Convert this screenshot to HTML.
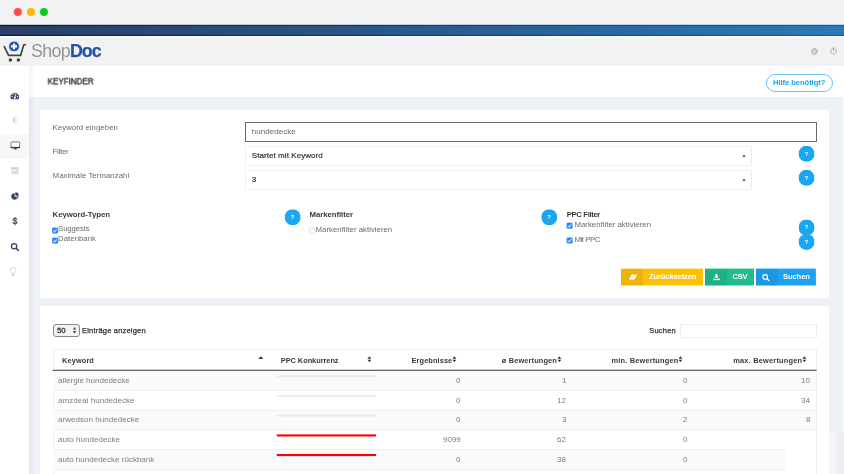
<!DOCTYPE html>
<html lang="de">
<head>
<meta charset="utf-8">
<title>ShopDoc – Keyfinder</title>
<style>
*{box-sizing:border-box;margin:0;padding:0}
html,body{width:844px;height:474px;overflow:hidden;background:#eef1f6;font-family:"Liberation Sans",sans-serif;}
body{position:relative}
.abs{position:absolute}
.t{position:absolute;white-space:nowrap;line-height:1;color:#6b6b6b;font-size:7.8px;will-change:transform}
.b{font-weight:bold;color:#3a3a3a}
#chrome{left:0;top:0;width:844px;height:24.4px;background:#f2f2f2}
.dot{position:absolute;left:0;top:0;width:8.4px;height:8.4px;border-radius:50%;will-change:transform}
#bluebar{left:0;top:24.4px;width:844px;height:11.6px;background:linear-gradient(90deg,#213b68 0%,#264f85 40%,#2b78b6 100%)}
#header{left:0;top:36px;width:844px;height:30px;background:#f2f2f2}
#sidebar{left:0;top:66px;width:29px;height:408px;background:#fff}
#sideshadow{left:29px;top:66px;width:6px;height:408px;background:linear-gradient(90deg,rgba(40,60,100,.06),rgba(40,60,100,0))}
#titlebar{left:29px;top:66px;width:815px;height:31px;background:#fff}
.card{position:absolute;left:40px;width:789px;background:#fff}
.inp{position:absolute;background:#fff;border:1px solid #efefef}
.help{will-change:transform;position:absolute;width:15.6px;height:15.6px;border-radius:50%;background:#1ba6f1;color:#fff;font-size:6.2px;font-weight:bold;text-align:center;line-height:15.8px}
.cb{position:absolute;left:0;top:0;width:6px;height:6px;border-radius:1.4px;background:#1b7ff8;will-change:transform}
.cb svg{position:absolute;left:0;top:0;width:6px;height:6px}
.cbu{position:absolute;left:0;top:0;width:6.3px;height:6.3px;border-radius:1.5px;background:#fff;border:1px solid #dedede;will-change:transform}
.btn{position:absolute;top:0;height:17.4px;will-change:transform}
.btn .ic{position:absolute;left:0;top:0;width:21.7px;height:17.4px}
.btn .tx{position:absolute;top:4.1px;white-space:nowrap;line-height:1;color:#fff;font-weight:bold;font-size:7.6px}
.th{will-change:transform;position:absolute;top:357px;white-space:nowrap;line-height:1;font-weight:bold;color:#3a3a3a;font-size:7.4px}
.row{position:absolute;left:53px;width:763px;height:19.75px;border-bottom:1px solid #eef0f3}
.row.odd{background:#f8fafc}
.row .c{will-change:transform;position:absolute;top:5.7px;white-space:nowrap;line-height:1;color:#7d7d7d;font-size:8px}
.sort{position:absolute;width:4.8px;height:6.4px}
</style>
</head>
<body>
<!-- window chrome -->
<div id="chrome" class="abs">
  <div class="dot" style="transform:translate(13.8px,7.95px);background:#fd4c4c"></div>
  <div class="dot" style="transform:translate(26.85px,7.95px);background:#ffb700"></div>
  <div class="dot" style="transform:translate(39.9px,7.95px);background:#10c822"></div>
</div>
<div id="header" class="abs"></div>
<svg class="abs" style="left:0;top:20px" width="844" height="20" viewBox="0 20 844 20">
  <defs>
    <linearGradient id="gb" x1="0" x2="1" y1="0" y2="0"><stop offset="0" stop-color="#05195a"/><stop offset=".5" stop-color="#034484"/><stop offset="1" stop-color="#0366b0"/></linearGradient>
    <linearGradient id="gi" x1="0" x2="1" y1="0" y2="0"><stop offset="0" stop-color="#2a3f66"/><stop offset=".5" stop-color="#2b5a8c"/><stop offset="1" stop-color="#2d79b5"/></linearGradient>
  </defs>
  <rect x="0" y="23.4" width="844" height="1.6" fill="#fafafa"/>
  <rect x="0" y="35.5" width="844" height="2.2" fill="#f9f9f9"/>
  <rect x="0" y="24.75" width="844" height="11.25" fill="url(#gb)"/>
  <rect x="0" y="26.15" width="844" height="8.6" fill="url(#gi)"/>
</svg>

<!-- logo -->
<svg class="abs" style="left:2px;top:40px" width="28" height="24" viewBox="0 0 28 24">
  <path d="M2 6.1 L6.6 15.3 L18.6 15.3 L21.7 4.9 L24.1 4.5" fill="none" stroke="#454545" stroke-width="1.7" stroke-linejoin="miter" stroke-linecap="butt"/>
  <circle cx="8.4" cy="20" r="1.75" fill="#454545"/>
  <circle cx="16.4" cy="20" r="1.75" fill="#454545"/>
  <circle cx="12.05" cy="6.4" r="5.4" fill="#2356b0" stroke="#f2f2f2" stroke-width=".8"/>
  <path d="M12.05 3.5 V9.3 M9.15 6.4 H14.95" stroke="#fff" stroke-width="2.1"/>
</svg>
<div class="t" id="shop" style="left:0;top:0;transform:translate(31px,42.6px);font-size:17.8px;color:#949494;letter-spacing:-0.62px">Shop</div>
<div class="t" id="doc" style="left:0;top:0;transform:translate(69.9px,42.6px);font-size:17.8px;color:#2254ae;font-weight:bold;letter-spacing:-0.95px;-webkit-text-stroke:.25px #2254ae">Doc</div>

<!-- header icons -->
<svg class="abs" style="left:810px;top:46.6px" width="9" height="9" viewBox="0 0 9 9">
  <circle cx="4.5" cy="4.5" r="3.05" fill="none" stroke="#9297ab" stroke-width=".9" stroke-dasharray="1.1 1.296"/>
  <circle cx="4.5" cy="4.5" r="2.45" fill="none" stroke="#9297ab" stroke-width=".65"/>
  <circle cx="4.5" cy="4.5" r="1.05" fill="none" stroke="#9297ab" stroke-width=".55"/>
</svg>
<svg class="abs" style="left:829.4px;top:46.4px" width="9" height="9" viewBox="0 0 9 9">
  <path d="M3.3 2.7 A2.8 2.8 0 1 0 5.7 2.7" fill="none" stroke="#8d92a8" stroke-width=".75" stroke-linecap="round"/>
  <path d="M4.5 1.6 V4.7" stroke="#8d92a8" stroke-width=".75" stroke-linecap="round"/>
</svg>

<!-- sidebar -->
<div id="sidebar" class="abs"></div>
<div class="abs" style="left:0;top:134px;width:29px;height:25px;background:#f7f7f7"></div>
<div id="titlebar" class="abs"></div>
<div id="sideshadow" class="abs"></div>

<div class="t" id="kf" style="left:0;top:0;transform-origin:0 0;transform:translate(47.6px,77.3px) scaleX(.935);font-size:8.6px;color:#1a1a1a;letter-spacing:0;-webkit-text-stroke:.3px #1a1a1a">KEYFINDER</div>
<div class="abs" style="left:766px;top:74px;width:67px;height:17.5px;border:1px solid #6cc0f6;border-radius:9px;background:#fff"></div>
<div class="t" id="hb" style="left:0;top:0;transform:translate(773px,78.6px);font-size:7.6px;color:#1da1f2;font-weight:bold;letter-spacing:-0.057px">Hilfe benötigt?</div>

<!-- sidebar icons -->
<svg class="abs" style="left:10.3px;top:90.8px" width="10" height="9" viewBox="0 0 10 9">
  <path d="M1.1 8.3 A4.3 4.3 0 1 1 8.5 8.3 Z" fill="#3d5375"/>
  <path d="M4.8 6.6 L5.9 3.4" stroke="#fff" stroke-width=".8" stroke-linecap="round"/>
  <circle cx="4.8" cy="6.7" r=".95" fill="#fff"/>
  <circle cx="2.1" cy="5.6" r=".55" fill="#fff"/><circle cx="2.9" cy="3.5" r=".55" fill="#fff"/><circle cx="4.8" cy="2.5" r=".55" fill="#fff"/><circle cx="7.5" cy="5.6" r=".55" fill="#fff"/>
</svg>
<div class="t" style="left:0;top:0;transform:translate(12.2px,116.2px);font-size:9px;color:#cacaca">€</div>
<svg class="abs" style="left:10.2px;top:141.3px" width="11" height="10" viewBox="0 0 11 10">
  <rect x="1.05" y=".95" width="8.6" height="5.8" rx=".6" fill="#fff" stroke="#4b5f7d" stroke-width=".8"/>
  <rect x=".7" y="5.9" width="9.3" height="1.2" fill="#1f3a5f"/>
  <path d="M4.3 7.1 H6.4 L6.9 8.5 H3.8 Z" fill="#2f4565"/>
</svg>
<svg class="abs" style="left:11px;top:167.4px" width="8" height="8" viewBox="0 0 8 8">
  <rect x="0" y=".2" width="8" height="1.9" fill="#cfcfcf"/>
  <rect x=".5" y="2.5" width="7" height="4.8" fill="#dcdcdc"/>
  <rect x="2.8" y="3.3" width="2.4" height=".8" fill="#f6f6f6"/>
</svg>
<svg class="abs" style="left:10.6px;top:191.9px" width="8.3" height="8.3" viewBox="0 0 9 9">
  <path d="M3.9 1 A3.7 3.7 0 1 0 7.1 6.6 L3.9 4.7 Z" fill="#2f4565"/>
  <path d="M4.7 .3 A3.8 3.8 0 0 1 8.5 4 L4.7 4 Z" fill="#2f4565"/>
  <path d="M5 4.8 L8.4 4.8 A3.8 3.8 0 0 1 7.8 6.5 Z" fill="#2f4565"/>
</svg>
<div class="t" style="left:0;top:0;transform:translate(12.45px,217.4px);font-size:8.8px;color:#2f4565;-webkit-text-stroke:.25px #2f4565">$</div>
<svg class="abs" style="left:10px;top:242px" width="10" height="10" viewBox="0 0 10 10">
  <circle cx="4.1" cy="4.2" r="2.65" fill="none" stroke="#2f4565" stroke-width="1.25"/>
  <path d="M6.2 6.3 L8.3 8.4" stroke="#2f4565" stroke-width="1.5" stroke-linecap="round"/>
</svg>
<svg class="abs" style="left:9.2px;top:266.8px" width="8" height="11" viewBox="0 0 8 11">
  <path d="M2.7 6.4 C2.7 5.3 1 4.9 1 3.4 A3 3 0 0 1 7 3.4 C7 4.9 5.3 5.3 5.3 6.4 Z" fill="none" stroke="#c9ced7" stroke-width=".75"/>
  <path d="M2.8 6.6 H5.2 V8.6 L4.6 9.3 H3.4 L2.8 8.6 Z" fill="#ccd1da"/>
</svg>

<!-- card 1 : filter form -->
<div class="card" style="top:109.5px;height:188.5px"></div>
<div class="t" id="l1" style="left:0;top:0;transform:translate(52.6px,123.6px);letter-spacing:0.044px">Keyword eingeben</div>
<div class="t" id="l2" style="left:0;top:0;transform:translate(52.6px,147.5px);letter-spacing:-0.254px">Filter</div>
<div class="t" id="l3" style="left:0;top:0;transform:translate(52.6px,172.1px);letter-spacing:0.047px">Maximale Termanzahl</div>

<div class="inp" style="left:245px;top:122px;width:571.5px;height:19.5px;border:1px solid #6a6a6a"></div>
<div class="t" id="v1" style="left:0;top:0;transform:translate(251.8px,128.3px);font-size:8px;color:#666;letter-spacing:0.041px">hundedecke</div>
<div class="inp" style="left:245px;top:146px;width:507px;height:19.5px"></div>
<div class="t" id="v2" style="left:0;top:0;transform:translate(251.8px,152.4px);font-size:8px;color:#333;-webkit-text-stroke:.2px #333;letter-spacing:0.063px">Startet mit Keyword</div>
<div class="inp" style="left:245px;top:170px;width:507px;height:19.5px"></div>
<div class="t" id="v3" style="left:0;top:0;transform:translate(251.8px,176.4px);font-size:8px;color:#333;-webkit-text-stroke:.2px #333">3</div>
<svg class="abs" style="left:742px;top:154.6px" width="4" height="3" viewBox="0 0 4 3"><path d="M.3 .4 H3.7 L2 2.4 Z" fill="#333"/></svg>
<svg class="abs" style="left:742px;top:178.6px" width="4" height="3" viewBox="0 0 4 3"><path d="M.3 .4 H3.7 L2 2.4 Z" fill="#333"/></svg>
<div class="help" style="left:0;top:0;transform:translate(798.55px,145.85px)">?</div>
<div class="help" style="left:0;top:0;transform:translate(798.55px,169.85px)">?</div>

<div class="t b" id="g1" style="left:0;top:0;transform:translate(52.6px,210.6px);letter-spacing:-0.047px">Keyword-Typen</div>
<div class="cb" style="transform:translate(52.15px,227.55px)"><svg viewBox="0 0 6 6"><path d="M1.3 3.1 L2.5 4.3 L4.7 1.7" fill="none" stroke="#fff" stroke-width="1.1"/></svg></div>
<div class="t" id="c1" style="left:0;top:0;transform:translate(58.1px,225.1px);letter-spacing:-0.140px">Suggests</div>
<div class="cb" style="transform:translate(52.15px,237.65px)"><svg viewBox="0 0 6 6"><path d="M1.3 3.1 L2.5 4.3 L4.7 1.7" fill="none" stroke="#fff" stroke-width="1.1"/></svg></div>
<div class="t" id="c2" style="left:0;top:0;transform:translate(58.1px,235.4px);letter-spacing:0.019px">Datenbank</div>

<div class="help" style="left:0;top:0;transform:translate(284.65px,209.25px)">?</div>
<div class="t b" id="g2" style="left:0;top:0;transform:translate(309.6px,211.1px);letter-spacing:-0.068px">Markenfilter</div>
<div class="cbu" style="transform:translate(309.3px,227.4px)"></div>
<div class="t" id="c3" style="left:0;top:0;transform:translate(315.6px,225.7px);letter-spacing:0.015px">Markenfilter aktivieren</div>

<div class="help" style="left:0;top:0;transform:translate(541.25px,209.25px)">?</div>
<div class="t b" id="g3" style="left:0;top:0;transform:translate(566.7px,210.6px);letter-spacing:-0.397px">PPC Filter</div>
<div class="cb" style="transform:translate(566.6px,222.7px)"><svg viewBox="0 0 6 6"><path d="M1.3 3.1 L2.5 4.3 L4.7 1.7" fill="none" stroke="#fff" stroke-width="1.1"/></svg></div>
<div class="t" id="c4" style="left:0;top:0;transform:translate(574.5px,220.8px);letter-spacing:0.010px">Markenfilter aktivieren</div>
<div class="cb" style="transform:translate(566.6px,237.5px)"><svg viewBox="0 0 6 6"><path d="M1.3 3.1 L2.5 4.3 L4.7 1.7" fill="none" stroke="#fff" stroke-width="1.1"/></svg></div>
<div class="t" id="c5" style="left:0;top:0;transform:translate(574.5px,235.9px);letter-spacing:-0.442px">Mit PPC</div>
<div class="help" style="left:0;top:0;transform:translate(798.55px,219.45px)">?</div>
<div class="help" style="left:0;top:0;transform:translate(798.55px,233.9px)">?</div>

<!-- buttons -->
<div class="btn" style="left:0;transform:translate(621px,268.6px);width:81.9px;background:#ffc107">
  <div class="ic" style="background:#eeb30a"></div>
  <svg class="abs" style="left:6.5px;top:5px" width="10" height="7" viewBox="0 0 10 7"><path d="M3.6 .9 H9.2 L6.4 6 H.8 Z" fill="#fff"/><path d="M2.4 3.6 H5.6 L7 .9" stroke="#eeb30a" stroke-width=".5" fill="none"/></svg>
  <div class="tx" id="b1" style="left:28px;letter-spacing:-0.138px">Zurücksetzen</div>
</div>
<div class="btn" style="left:0;transform:translate(705px,268.6px);width:48.9px;background:#1fbd8d">
  <div class="ic" style="background:#1eb184"></div>
  <svg class="abs" style="left:8px;top:5px" width="7" height="7" viewBox="0 0 7 7"><path d="M2.6 .3 H4.4 V2.6 H5.8 L3.5 4.9 L1.2 2.6 H2.6 Z" fill="#fff"/><path d="M.3 4.9 H2 L3.5 6 L5 4.9 H6.7 V6.7 H.3 Z" fill="#fff"/></svg>
  <div class="tx" id="b2" style="left:27.5px;letter-spacing:-0.273px">CSV</div>
</div>
<div class="btn" style="left:0;transform:translate(755.9px,268.6px);width:60.2px;background:#1da1f2">
  <div class="ic" style="background:#1b97e6"></div>
  <svg class="abs" style="left:6px;top:4.6px" width="8" height="8" viewBox="0 0 8 8"><circle cx="3.3" cy="3.3" r="2.3" fill="none" stroke="#fff" stroke-width="1.1"/><path d="M5.1 5.1 L7.1 7.1" stroke="#fff" stroke-width="1.3" stroke-linecap="round"/></svg>
  <div class="tx" id="b3" style="left:27px;letter-spacing:-0.073px">Suchen</div>
</div>

<!-- card 2 : results table -->
<div class="card" style="top:305.5px;height:169px"></div>
<div class="abs" style="left:52.5px;top:324px;width:27.7px;height:12.7px;border:1px solid #8a8a8a;border-radius:3px;background:#f3f3f3"></div>
<div class="t" id="n50" style="left:0;top:0;transform:translate(57px,327.1px);font-size:7.8px;color:#333;-webkit-text-stroke:.3px #333">50</div>
<svg class="abs" style="left:73.3px;top:327.1px" width="3.2" height="6.6" viewBox="0 0 3.2 6.6"><path d="M1.6 .1 L3.1 2.6 H.1 Z M1.6 6.5 L3.1 4 H.1 Z" fill="#333"/></svg>
<div class="t" id="ea" style="left:0;top:0;transform:translate(82px,326.6px);font-size:7.5px;color:#333;-webkit-text-stroke:.25px #333;letter-spacing:0.196px">Einträge anzeigen</div>
<div class="t" id="su" style="left:0;top:0;transform:translate(649.2px,326.6px);font-size:7.5px;color:#333;-webkit-text-stroke:.25px #333;letter-spacing:0.209px">Suchen</div>
<div class="inp" style="left:680px;top:324px;width:137px;height:14px"></div>

<!-- table -->
<div class="abs" style="left:52.6px;top:349px;width:764px;height:125px;border:1px solid #eef0f3;border-bottom:0"></div>
<div class="th" id="h1" style="left:0;top:0;transform:translate(62px,357px);letter-spacing:0.112px">Keyword</div>
<div class="th" id="h2" style="left:0;top:0;transform:translate(280.8px,357px);letter-spacing:-0.044px">PPC Konkurrenz</div>
<div class="th" id="h3" style="left:0;top:0;transform:translate(411.6px,357px);letter-spacing:0.085px">Ergebnisse</div>
<div class="th" id="h4" style="left:0;top:0;transform:translate(501.8px,357px);letter-spacing:0.140px">ø Bewertungen</div>
<div class="th" id="h5" style="left:0;top:0;transform:translate(611.6px,357px);letter-spacing:0.171px">min. Bewertungen</div>
<div class="th" id="h6" style="left:0;top:0;transform:translate(733.2px,357px);letter-spacing:0.211px">max. Bewertungen</div>
<svg class="abs" style="left:257.6px;top:356.2px" width="5.6" height="3.2" viewBox="0 0 5.6 3.2"><path d="M2.8 .2 L5.4 3 H.2 Z" fill="#3a3a3a"/></svg>
<svg class="sort" style="left:366.9px;top:356.1px" viewBox="0 0 4 6"><path d="M2 .3 L3.8 2.5 H.2 Z M2 5.7 L3.8 3.5 H.2 Z" fill="#333"/></svg>
<svg class="sort" style="left:452.2px;top:356.1px" viewBox="0 0 4 6"><path d="M2 .3 L3.8 2.5 H.2 Z M2 5.7 L3.8 3.5 H.2 Z" fill="#333"/></svg>
<svg class="sort" style="left:557px;top:356.1px" viewBox="0 0 4 6"><path d="M2 .3 L3.8 2.5 H.2 Z M2 5.7 L3.8 3.5 H.2 Z" fill="#333"/></svg>
<svg class="sort" style="left:678.3px;top:356.1px" viewBox="0 0 4 6"><path d="M2 .3 L3.8 2.5 H.2 Z M2 5.7 L3.8 3.5 H.2 Z" fill="#333"/></svg>
<svg class="sort" style="left:802.2px;top:356.1px" viewBox="0 0 4 6"><path d="M2 .3 L3.8 2.5 H.2 Z M2 5.7 L3.8 3.5 H.2 Z" fill="#333"/></svg>

<div class="row odd" style="top:371px;height:20px"><div class="c" id="k1" style="top:6px;left:5.3px;letter-spacing:0.009px">allergie hundedecke</div><div class="c" style="top:6px;right:355.5px">0</div><div class="c" style="top:6px;right:250px">1</div><div class="c" style="top:6px;right:129px">0</div><div class="c" style="top:6px;right:5.7px">10</div></div>
<div class="row" style="top:391px;height:20px"><div class="c" id="k2" style="top:6px;left:5.3px;letter-spacing:0.029px">amzdeal hundedecke</div><div class="c" style="top:6px;right:355.5px">0</div><div class="c" style="top:6px;right:250px">12</div><div class="c" style="top:6px;right:129px">0</div><div class="c" style="top:6px;right:5.7px">34</div></div>
<div class="row odd" style="top:411px;height:19px"><div class="c" id="k3" style="top:5px;left:5.3px;letter-spacing:0.041px">arwedson hundedecke</div><div class="c" style="top:5px;right:355.5px">0</div><div class="c" style="top:5px;right:250px">3</div><div class="c" style="top:5px;right:129px">2</div><div class="c" style="top:5px;right:5.7px">8</div></div>
<div class="row" style="top:430px;height:20px"><div class="c" id="k4" style="top:6px;left:5.3px;letter-spacing:0.040px">auto hundedecke</div><div class="c" style="top:6px;right:355.5px">9099</div><div class="c" style="top:6px;right:250px">62</div><div class="c" style="top:6px;right:129px">0</div></div>
<div class="row odd" style="top:450px;height:20px"><div class="c" id="k5" style="top:6px;left:5.3px;letter-spacing:0.009px">auto hundedecke rückbank</div><div class="c" style="top:6px;right:355.5px">0</div><div class="c" style="top:6px;right:250px">38</div><div class="c" style="top:6px;right:129px">0</div></div>
<div class="row" style="top:470px;height:4px;border:0"></div>

<svg class="abs" style="left:0;top:0" width="844" height="474" viewBox="0 0 844 474">
  <rect x="842.3" y="97" width="1.7" height="377" fill="#f8f9fb"/>
  <rect x="52.6" y="369.7" width="764" height="1.25" fill="#5e5e5e"/>
  <rect x="276.8" y="375.3" width="99.2" height="2" fill="#e9ecef"/>
  <rect x="276.8" y="394.9" width="99.2" height="2" fill="#e9ecef"/>
  <rect x="276.8" y="414.6" width="99.2" height="2" fill="#e9ecef"/>
  <rect x="276.8" y="434.4" width="99.2" height="2.1" fill="#ff0000"/>
  <rect x="276.8" y="454" width="99.2" height="2.1" fill="#ff0000"/>
</svg>
<!-- floating widget overlay bottom right -->
<div class="abs" style="left:784.5px;top:431px;width:31.4px;height:43px;background:#fff"></div>
<div class="abs" style="left:829px;top:432px;width:15px;height:42px;background:linear-gradient(90deg,#f5f6f9 0,#f5f6f9 6px,#eff1f5 7px,#eceef2 15px)"></div>
</body>
</html>
